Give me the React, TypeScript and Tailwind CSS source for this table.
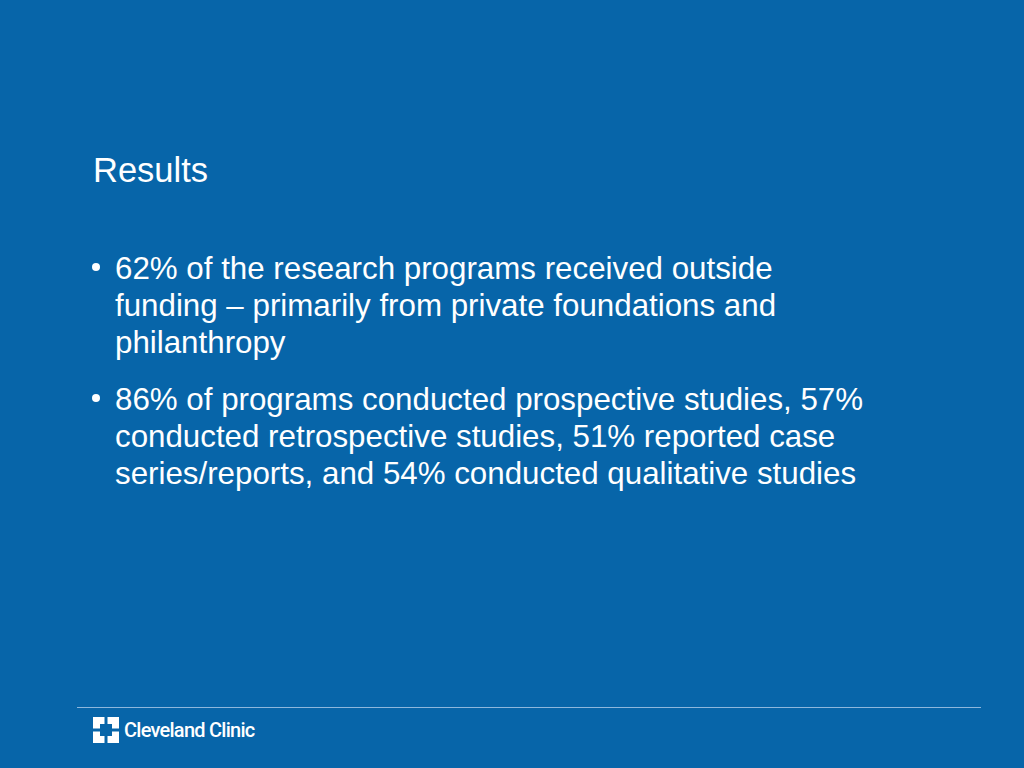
import React from "react";

function Logo() {
  return (
    <svg width="26" height="26" viewBox="0 0 26 26" aria-hidden="true">
      <path d="M0 0H11.5V7H7V11.5H0Z" fill="#ffffff" />
      <path d="M14.5 0H26V11.5H19V7H14.5Z" fill="#ffffff" />
      <path d="M0 14.5H7V19H11.5V26H0Z" fill="#ffffff" />
      <path d="M19 14.5H26V26H14.5V19H19Z" fill="#ffffff" />
    </svg>
  );
}

function Bullet({ children }: { children: React.ReactNode }) {
  return (
    <li className="flex">
      <div className="w-[23px] shrink-0 pl-[92px] box-content">
        <div className="w-[8px] h-[8px] rounded-full bg-white mt-[13px]" />
      </div>
      <p className="w-[760px] text-[31.3px] leading-[37px] text-white">{children}</p>
    </li>
  );
}

export default function App() {
  return (
    <div
      className="w-full h-[768px] bg-[#0765a9] flex flex-col overflow-hidden"
      style={{ fontFamily: '"Liberation Sans", Arial, sans-serif' }}
    >
      <h1 className="pt-[153px] pl-[93px] text-[34.5px] leading-[34px] text-white font-normal">
        Results
      </h1>
      <ul className="mt-[63px] flex flex-col gap-[20px]">
        <Bullet>
          62% of the research programs received outside funding – primarily from private foundations and philanthropy
        </Bullet>
        <Bullet>
          86% of programs conducted prospective studies, 57% conducted retrospective studies, 51% reported case series/reports, and 54% conducted qualitative studies
        </Bullet>
      </ul>
      <footer className="mt-auto">
        <div className="ml-[77px] w-[904px] h-px bg-[#8db7dd]" />
        <div className="flex items-center pl-[93px] pt-[9px] pb-[25px] h-[60px] box-border">
          <Logo />
          <span
            className="ml-[5px] text-[20px] leading-[26px] text-white font-medium tracking-[-0.75px]"
            style={{ fontFamily: '"Liberation Sans Narrow", "Roboto", sans-serif' }}
          >
            Cleveland Clinic
          </span>
        </div>
      </footer>
    </div>
  );
}
